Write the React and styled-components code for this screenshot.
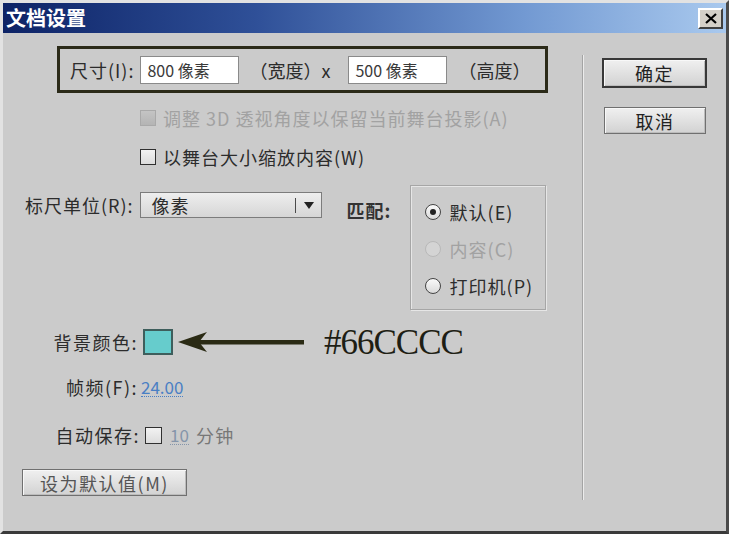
import React from 'react';
import styled, { createGlobalStyle } from 'styled-components';

const GlobalStyle = createGlobalStyle`
  html, body {
    margin: 0;
    padding: 0;
    background: #cbcbcb;
  }
  body {
    font-family: "Noto Sans CJK SC", "Noto Sans", sans-serif;
    color: #2c2c2c;
  }
`;

const Window = styled.div`
  width: 729px;
  height: 534px;
  box-sizing: border-box;
  border: 3px solid;
  border-color: #e2e2e2 #4a4a4a #3a3a3a #e2e2e2;
  background: #cbcbcb;
  display: flex;
  flex-direction: column;
  overflow: hidden;
`;

const TitleBar = styled.div`
  height: 30px;
  flex-shrink: 0;
  display: flex;
  align-items: center;
  justify-content: space-between;
  padding: 0 3px 0 3px;
  background: linear-gradient(90deg, #0d2366 0%, #2f5098 35%, #7299d2 72%, #a9c9ee 100%);
`;

const Title = styled.div`
  color: #ffffff;
  font-size: 20px;
  font-weight: 700;
  line-height: 30px;
`;

const CloseButton = styled.div`
  width: 25px;
  height: 21px;
  box-sizing: border-box;
  background: #d4d0c8;
  border: 2px solid;
  border-color: #ffffff #404040 #404040 #ffffff;
  display: flex;
  align-items: center;
  justify-content: center;
`;

const Body = styled.div`
  flex: 1;
  display: flex;
`;

const LeftPane = styled.div`
  width: 579px;
  display: flex;
  flex-direction: column;
  align-items: flex-start;
`;

const Separator = styled.div`
  width: 0;
  margin-top: 22px;
  height: 445px;
  border-left: 1px solid #a4a4a4;
  border-right: 1px solid #ececec;
`;

const RightPane = styled.div`
  flex: 1;
  display: flex;
  flex-direction: column;
  align-items: flex-start;
`;

const SizeBox = styled.div`
  margin: 13px 0 0 54px;
  width: 491px;
  height: 47px;
  box-sizing: border-box;
  border: 3px solid #2b2a18;
  display: flex;
  align-items: center;
  padding-left: 10px;
  font-size: 18px;
`;

const Label = styled.span`
  font-size: 18px;
  letter-spacing: ${(p) => (p.$tight ? '0' : '1px')};
  white-space: nowrap;
  color: ${(p) => (p.$disabled ? '#a2a2a2' : '#2c2c2c')};
  margin-left: ${(p) => p.$ml || 0}px;
`;

const TextInput = styled.div`
  width: 99px;
  height: 28px;
  box-sizing: border-box;
  background: #ffffff;
  border: 1px solid #8a8a8a;
  padding-left: 6px;
  font-size: 16px;
  line-height: 26px;
  color: #3a3a3a;
  margin-left: ${(p) => p.$ml || 0}px;
`;

const CheckRow = styled.div`
  display: flex;
  align-items: center;
  height: 24px;
  padding-left: 137px;
  margin-top: ${(p) => p.$mt}px;
  gap: 7px;
`;

const Checkbox = styled.div`
  width: ${(p) => p.$size || 16}px;
  height: ${(p) => p.$size || 16}px;
  box-sizing: border-box;
  border: 1px solid ${(p) => (p.$disabled ? '#a9a9a9' : '#303030')};
  background: ${(p) =>
    p.$disabled ? 'linear-gradient(#c4c4c4, #b4b4b4)' : 'linear-gradient(#f2f2f2, #dcdcdc)'};
  margin-left: ${(p) => p.$ml || 0}px;
  flex-shrink: 0;
`;

const MainRow = styled.div`
  display: flex;
  align-items: flex-start;
  margin-top: 16px;
`;

const RulerField = styled.div`
  display: flex;
  align-items: center;
  height: 26px;
  margin: 7px 0 0 22px;
  gap: 6px;
`;

const Select = styled.div`
  width: 182px;
  height: 26px;
  box-sizing: border-box;
  border: 1px solid #7c7c7c;
  background: linear-gradient(#eeeeee, #d6d6d6);
  display: flex;
  align-items: center;
  padding-left: 11px;
  font-size: 18px;
  letter-spacing: 1px;
`;

const SelectText = styled.span`
  flex: 1;
`;

const SelectDivider = styled.div`
  width: 1px;
  height: 15px;
  background: #4a4a4a;
  margin-right: 8px;
`;

const Caret = styled.svg`
  margin-right: 7px;
`;

const MatchLabel = styled.div`
  width: 63px;
  margin: 13px 0 0 25px;
  height: 24px;
  line-height: 24px;
  font-size: 18px;
  font-weight: 700;
  letter-spacing: 1px;
  color: #333;
`;

const GroupBox = styled.div`
  width: 136px;
  height: 125px;
  box-sizing: border-box;
  border: 1px solid #a6a6a6;
  box-shadow: inset 1px 1px 0 #e6e6e6, 1px 1px 0 #e6e6e6;
  padding: 14px 0 0 14px;
  display: flex;
  flex-direction: column;
  gap: 13px;
`;

const RadioRow = styled.div`
  display: flex;
  align-items: center;
  height: 24px;
  gap: 9px;
`;

const Radio = styled.div`
  width: 16px;
  height: 16px;
  box-sizing: border-box;
  border-radius: 50%;
  border: 1px solid ${(p) => (p.$disabled ? '#b8b8b8' : '#444')};
  background: ${(p) => (p.$disabled ? '#d4d4d4' : 'linear-gradient(#fafafa, #dadada)')};
  display: flex;
  align-items: center;
  justify-content: center;
  &::after {
    content: '';
    display: ${(p) => (p.$checked ? 'block' : 'none')};
    width: 6px;
    height: 6px;
    border-radius: 50%;
    background: #222;
  }
`;

const FieldRow = styled.div`
  display: flex;
  align-items: center;
  height: ${(p) => p.$h || 24}px;
  margin-top: ${(p) => p.$mt}px;
`;

const FieldLabel = styled.span`
  width: ${(p) => p.$w || 135}px;
  text-align: right;
  font-size: 18px;
  letter-spacing: 1.5px;
  white-space: nowrap;
`;

const Swatch = styled.div`
  width: 30px;
  height: 26px;
  box-sizing: border-box;
  background: #66cccc;
  border: 2px solid #3e5e5c;
  margin-left: 5px;
`;

const Arrow = styled.svg`
  margin-left: 5px;
`;

const ColorCode = styled.span`
  margin-left: 20px;
  font-family: "Liberation Serif", "Times New Roman", serif;
  font-size: 35px;
  letter-spacing: -1px;
  color: #1e1e14;
  line-height: 1;
`;

const LinkValue = styled.span`
  margin-left: ${(p) => p.$ml || 0}px;
  font-size: 17px;
  color: ${(p) => (p.$muted ? '#8595aa' : '#4a7fc4')};
  border-bottom: 1px dotted ${(p) => (p.$muted ? '#8595aa' : '#4a7fc4')};
  line-height: 19px;
`;

const MutedText = styled.span`
  margin-left: ${(p) => p.$ml || 0}px;
  font-size: 18px;
  letter-spacing: 1.5px;
  color: #777;
`;

const Button = styled.div`
  width: ${(p) => p.$w}px;
  height: ${(p) => p.$h}px;
  box-sizing: border-box;
  margin: ${(p) => p.$mt}px 0 0 ${(p) => p.$ml}px;
  border: ${(p) => (p.$primary ? '2px solid #383838' : '1px solid #707070')};
  box-shadow: inset 1px 1px 0 #f8f8f8, inset -1px -1px 0 #bcbcbc;
  background: linear-gradient(#f0f0f0, #d2d2d2);
  display: flex;
  align-items: center;
  justify-content: center;
  font-size: 18px;
  letter-spacing: 1.5px;
  color: ${(p) => p.$color || '#222'};
`;

export default function App() {
  return (
    <>
      <GlobalStyle />
      <Window>
        <TitleBar>
          <Title>文档设置</Title>
          <CloseButton>
            <svg width="12" height="11" viewBox="0 0 12 11">
              <path d="M1 1 L11 10 M11 1 L1 10" stroke="#000" strokeWidth="2.2" />
            </svg>
          </CloseButton>
        </TitleBar>
        <Body>
          <LeftPane>
            <SizeBox>
              <Label>尺寸(I):</Label>
              <TextInput $ml={6}>800 像素</TextInput>
              <Label $tight $ml={10}>（宽度）x</Label>
              <TextInput $ml={18}>500 像素</TextInput>
              <Label $tight $ml={11}>（高度）</Label>
            </SizeBox>

            <CheckRow $mt={13}>
              <Checkbox $disabled />
              <Label $disabled>调整 3D 透视角度以保留当前舞台投影(A)</Label>
            </CheckRow>
            <CheckRow $mt={15}>
              <Checkbox />
              <Label>以舞台大小缩放内容(W)</Label>
            </CheckRow>

            <MainRow>
              <RulerField>
                <Label>标尺单位(R):</Label>
                <Select>
                  <SelectText>像素</SelectText>
                  <SelectDivider />
                  <Caret width="10" height="7" viewBox="0 0 10 7">
                    <path d="M0 0 H10 L5 7 Z" fill="#222" />
                  </Caret>
                </Select>
              </RulerField>
              <MatchLabel>匹配:</MatchLabel>
              <GroupBox>
                <RadioRow>
                  <Radio $checked />
                  <Label>默认(E)</Label>
                </RadioRow>
                <RadioRow>
                  <Radio $disabled />
                  <Label $disabled>内容(C)</Label>
                </RadioRow>
                <RadioRow>
                  <Radio />
                  <Label>打印机(P)</Label>
                </RadioRow>
              </GroupBox>
            </MainRow>

            <FieldRow $mt={19} $h={26}>
              <FieldLabel>背景颜色:</FieldLabel>
              <Swatch />
              <Arrow width="126" height="22" viewBox="0 0 126 22">
                <path d="M0 11 L29 1 L21 11 L29 21 Z" fill="#2a2a14" />
                <rect x="20" y="9" width="106" height="4.5" fill="#2a2a14" />
              </Arrow>
              <ColorCode>#66CCCC</ColorCode>
            </FieldRow>

            <FieldRow $mt={20}>
              <FieldLabel>帧频(F):</FieldLabel>
              <LinkValue $ml={3}>24.00</LinkValue>
            </FieldRow>

            <FieldRow $mt={24}>
              <FieldLabel $w={137}>自动保存:</FieldLabel>
              <Checkbox $size={17} $ml={5} />
              <LinkValue $muted $ml={8}>10</LinkValue>
              <MutedText $ml={7}>分钟</MutedText>
            </FieldRow>

            <Button $w={165} $h={27} $mt={22} $ml={19} $color="#555">
              设为默认值(M)
            </Button>
          </LeftPane>
          <Separator />
          <RightPane>
            <Button $primary $w={105} $h={30} $mt={25} $ml={18}>
              确定
            </Button>
            <Button $w={102} $h={27} $mt={19} $ml={20}>
              取消
            </Button>
          </RightPane>
        </Body>
      </Window>
    </>
  );
}
